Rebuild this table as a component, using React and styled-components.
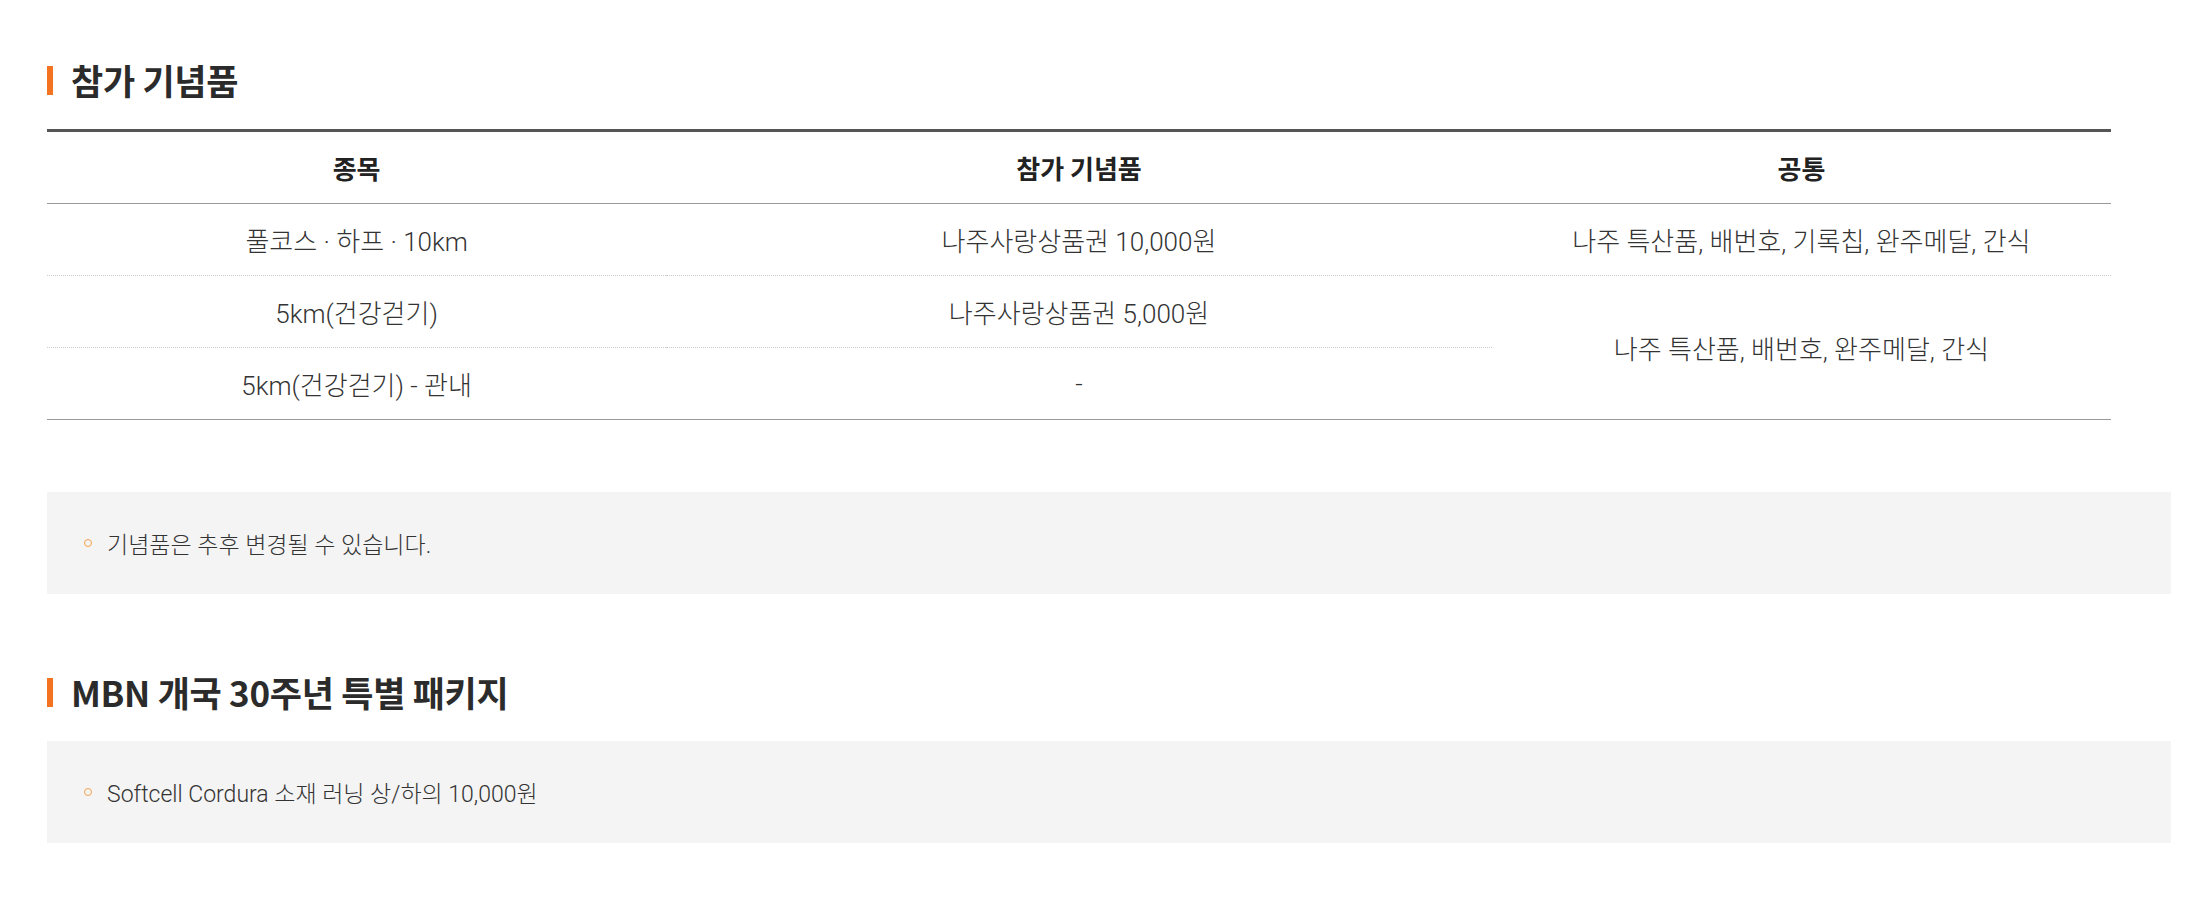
import React from "react";
import styled, { createGlobalStyle } from "styled-components";

const GlobalStyle = createGlobalStyle`
  html, body {
    margin: 0;
    padding: 0;
    background: #fff;
  }
  body {
    font-family: Roboto, "Noto Sans CJK KR", "Noto Sans", sans-serif;
    color: #333;
  }
`;

const rows = [
  { course: "풀코스 · 하프 · 10km", gift: "나주사랑상품권 10,000원", common: "나주 특산품, 배번호, 기록칩, 완주메달, 간식", span: 1 },
  { course: "5km(건강걷기)", gift: "나주사랑상품권 5,000원", common: "나주 특산품, 배번호, 완주메달, 간식", span: 2 },
  { course: "5km(건강걷기) - 관내", gift: "-" },
];

const App = () => {
  return (
    <Page>
      <GlobalStyle />
      <Section>
        <Title>
          <Bar />
          참가 기념품
        </Title>
        <Table>
          <colgroup>
            <col style={{ width: "30%" }} />
            <col style={{ width: "40%" }} />
            <col style={{ width: "30%" }} />
          </colgroup>
          <thead>
            <tr>
              <Th>종목</Th>
              <Th>참가 기념품</Th>
              <Th>공통</Th>
            </tr>
          </thead>
          <tbody>
            {rows.map((row, i) => (
              <tr key={i}>
                <Td>{row.course}</Td>
                <Td>{row.gift}</Td>
                {row.common && <Td rowSpan={row.span}>{row.common}</Td>}
              </tr>
            ))}
          </tbody>
        </Table>
        <NoteBox>
          <NoteItem>기념품은 추후 변경될 수 있습니다.</NoteItem>
        </NoteBox>
      </Section>

      <Section $gap>
        <Title>
          <Bar />
          MBN 개국 30주년 특별 패키지
        </Title>
        <NoteBox $tight>
          <NoteItem>Softcell Cordura 소재 러닝 상/하의 10,000원</NoteItem>
        </NoteBox>
      </Section>
    </Page>
  );
};

export default App;

const Page = styled.div`
  padding: 60px 40px 54px 47px;
`;

const Section = styled.section`
  display: flex;
  flex-direction: column;
  margin-top: ${({ $gap }) => ($gap ? "78px" : "0")};
`;

const Title = styled.h3`
  display: flex;
  align-items: center;
  gap: 18px;
  margin: 0;
  height: 40px;
  font-family: "Noto Sans CJK KR", "Noto Sans", sans-serif;
  font-size: 35px;
  line-height: 40px;
  font-weight: 700;
  color: #2b2b2b;
  letter-spacing: -0.3px;
`;

const Bar = styled.span`
  display: block;
  width: 6px;
  height: 29px;
  background: #f37321;
`;

const Table = styled.table`
  width: calc(100% - 60px);
  margin-top: 29px;
  border-collapse: collapse;
  table-layout: fixed;
  border-top: 3px solid #555;
  border-bottom: 1px solid #999;
`;

const Th = styled.th`
  height: 71px;
  padding: 0;
  font-family: "Noto Sans CJK KR", "Noto Sans", sans-serif;
  font-size: 26px;
  font-weight: 700;
  color: #222;
  text-align: center;
  border-bottom: 1px solid #999;
`;

const Td = styled.td`
  height: 71px;
  padding: 0;
  font-size: 26px;
  font-weight: 300;
  color: #333;
  text-align: center;
  border-bottom: 1px dotted #ccc;
`;

const NoteBox = styled.ul`
  list-style: none;
  margin: ${({ $tight }) => ($tight ? "29px" : "72px")} 0 0;
  padding: 0 40px 0 37px;
  height: 102px;
  display: flex;
  flex-direction: column;
  justify-content: center;
  background: #f4f4f4;
`;

const NoteItem = styled.li`
  position: relative;
  padding-left: 23px;
  font-size: 23px;
  font-weight: 300;
  color: #333;

  &::before {
    content: "";
    position: absolute;
    left: 0;
    top: 50%;
    width: 6px;
    height: 6px;
    margin-top: -4px;
    border: 1.5px solid #f5a24b;
    border-radius: 50%;
  }
`;
